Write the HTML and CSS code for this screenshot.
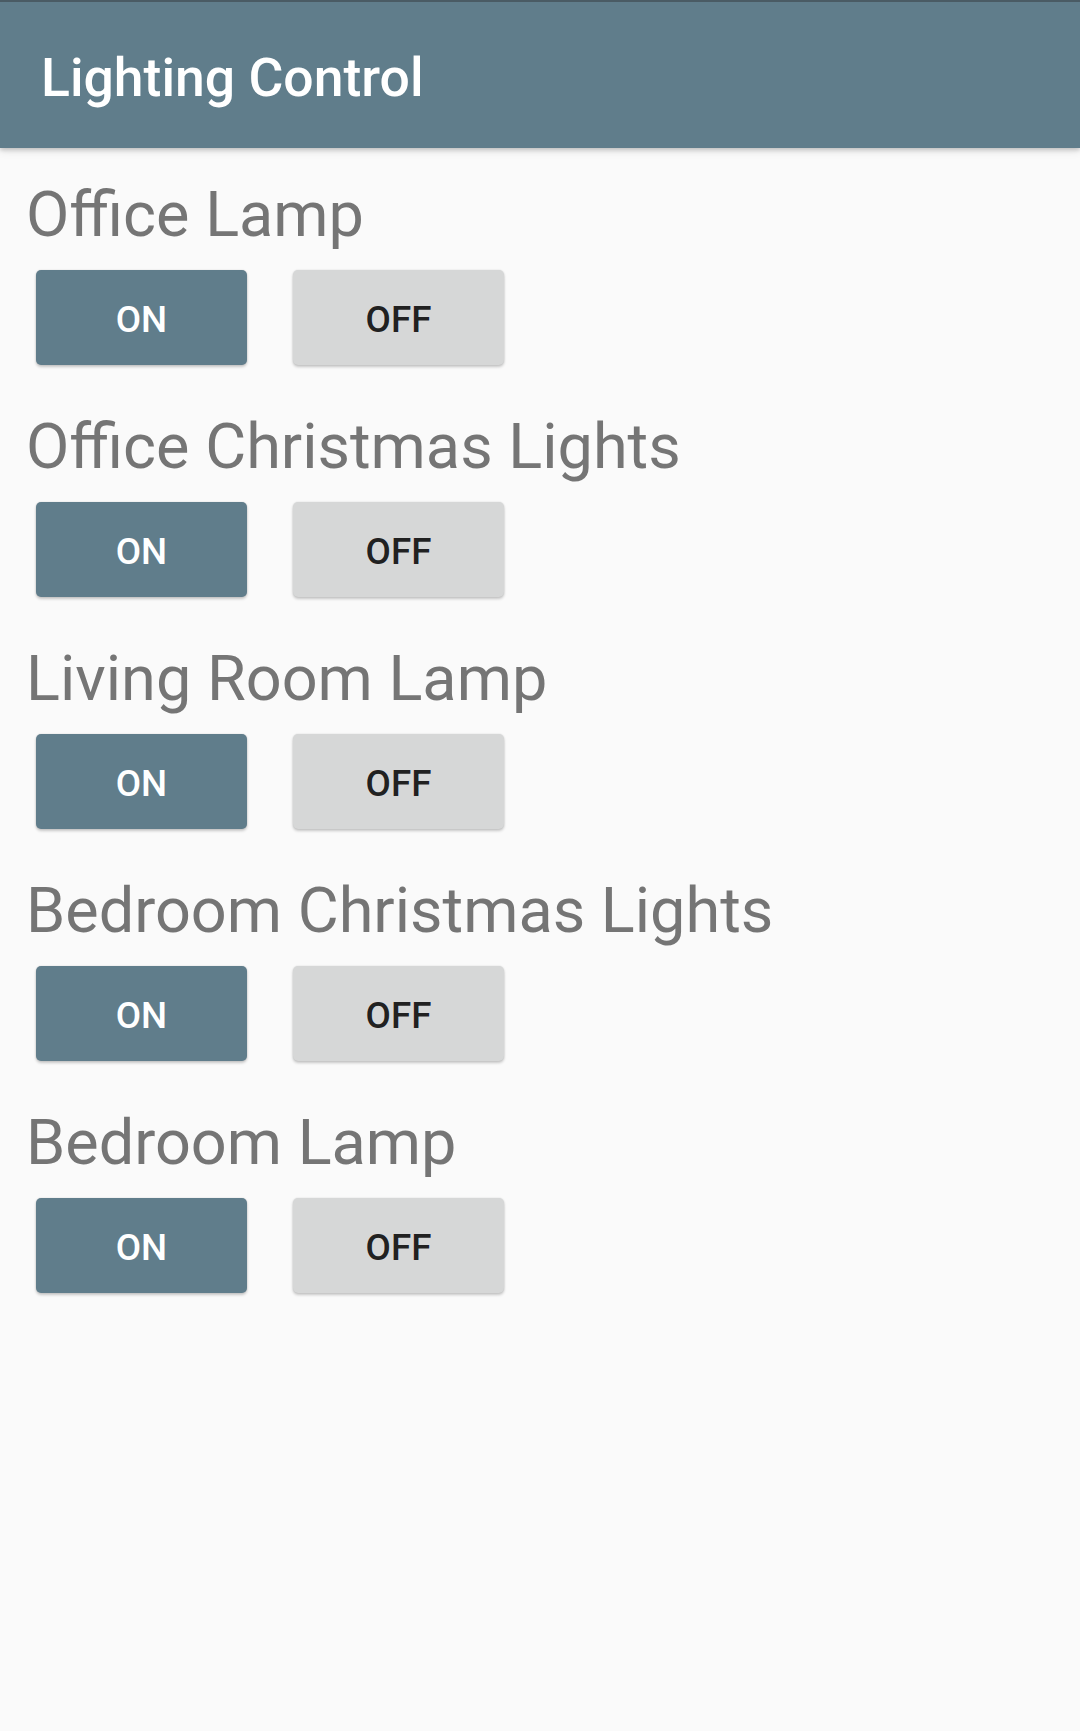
FILE: index.html
```html
<!DOCTYPE html>
<html lang="en">
<head>
<meta charset="utf-8">
<title>Lighting Control</title>
<link rel="stylesheet" href="styles.css">
</head>
<body>
<header class="appbar">
  <h1 class="appbar-title">Lighting Control</h1>
</header>
<main class="content">
  <section class="light">
    <h2 class="light-name">Office Lamp</h2>
    <div class="light-actions">
      <button class="btn btn-on">ON</button>
      <button class="btn btn-off">OFF</button>
    </div>
  </section>
  <section class="light">
    <h2 class="light-name">Office Christmas Lights</h2>
    <div class="light-actions">
      <button class="btn btn-on">ON</button>
      <button class="btn btn-off">OFF</button>
    </div>
  </section>
  <section class="light">
    <h2 class="light-name">Living Room Lamp</h2>
    <div class="light-actions">
      <button class="btn btn-on">ON</button>
      <button class="btn btn-off">OFF</button>
    </div>
  </section>
  <section class="light">
    <h2 class="light-name">Bedroom Christmas Lights</h2>
    <div class="light-actions">
      <button class="btn btn-on">ON</button>
      <button class="btn btn-off">OFF</button>
    </div>
  </section>
  <section class="light">
    <h2 class="light-name">Bedroom Lamp</h2>
    <div class="light-actions">
      <button class="btn btn-on">ON</button>
      <button class="btn btn-off">OFF</button>
    </div>
  </section>
</main>
</body>
</html>
```
FILE: styles.css
```css
html, body {
  margin: 0;
  padding: 0;
}

body {
  background: #fafafa;
  font-family: Roboto, "Noto Sans", "Liberation Sans", sans-serif;
  min-height: 1731px;
}

.appbar {
  box-sizing: border-box;
  height: 148px;
  background: #607d8b;
  border-top: 2px solid #4a5b64;
  padding: 45px 0 0 41px;
  box-shadow: 0 2px 4px rgba(0, 0, 0, 0.18), 0 4px 8px rgba(0, 0, 0, 0.08);
  position: relative;
  z-index: 1;
}

.appbar-title {
  margin: 0;
  font-size: 53.5px;
  font-weight: 500;
  line-height: 62px;
  color: #ffffff;
}

.content {
  padding: 30px 0 0 26px;
}

.light {
  margin-bottom: 45px;
}

.light-name {
  margin: 0;
  font-size: 63px;
  font-weight: 400;
  line-height: 74px;
  color: #757575;
}

.light-actions {
  display: flex;
  gap: 46px;
  margin: 18px 0 0 10px;
}

.btn {
  box-sizing: border-box;
  width: 211px;
  height: 95px;
  padding: 4px 0 0 0;
  border: none;
  border-radius: 5px;
  font-family: Roboto, "Noto Sans", "Liberation Sans", sans-serif;
  font-size: 36.75px;
  font-weight: 500;
  line-height: 91px;
  text-align: center;
  box-shadow: 0 2px 3px rgba(0, 0, 0, 0.2), 0 0 2px rgba(0, 0, 0, 0.12);
}

.btn-on {
  background: #607d8b;
  color: #ffffff;
}

.btn-off {
  background: #d6d7d7;
  color: rgba(0, 0, 0, 0.87);
}
```
